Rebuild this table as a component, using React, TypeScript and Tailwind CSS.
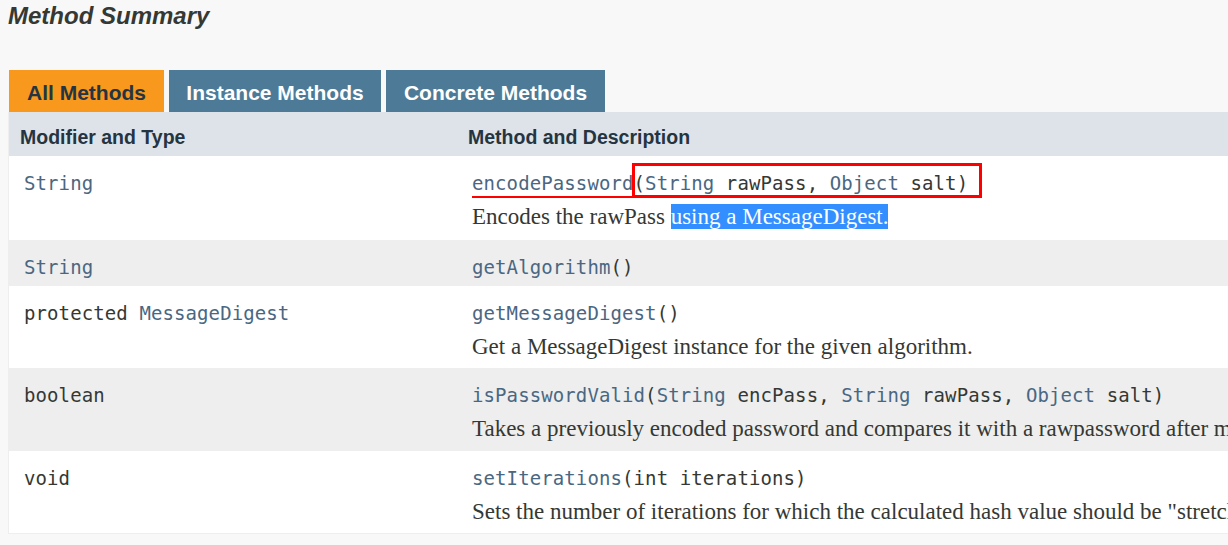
import React from 'react';

type Part = { text: string; link?: boolean };

interface MethodRow {
  modifier: Part[];
  name: string;
  params: Part[];
  desc?: string;
  height: string;
  shaded: boolean;
}

const rows: MethodRow[] = [
  {
    modifier: [{ text: 'String', link: true }],
    name: 'encodePassword',
    params: [
      { text: '(' },
      { text: 'String', link: true },
      { text: ' rawPass, ' },
      { text: 'Object', link: true },
      { text: ' salt)' },
    ],
    desc: 'Encodes the rawPass',
    height: 'h-[84px]',
    shaded: false,
  },
  {
    modifier: [{ text: 'String', link: true }],
    name: 'getAlgorithm',
    params: [{ text: '()' }],
    height: 'h-[46px]',
    shaded: true,
  },
  {
    modifier: [{ text: 'protected ' }, { text: 'MessageDigest', link: true }],
    name: 'getMessageDigest',
    params: [{ text: '()' }],
    desc: 'Get a MessageDigest instance for the given algorithm.',
    height: 'h-[82px]',
    shaded: false,
  },
  {
    modifier: [{ text: 'boolean' }],
    name: 'isPasswordValid',
    params: [
      { text: '(' },
      { text: 'String', link: true },
      { text: ' encPass, ' },
      { text: 'String', link: true },
      { text: ' rawPass, ' },
      { text: 'Object', link: true },
      { text: ' salt)' },
    ],
    desc: 'Takes a previously encoded password and compares it with a rawpassword after mixing in the salt and encoding that value',
    height: 'h-[83px]',
    shaded: true,
  },
  {
    modifier: [{ text: 'void' }],
    name: 'setIterations',
    params: [{ text: '(int iterations)' }],
    desc: 'Sets the number of iterations for which the calculated hash value should be "stretched".',
    height: 'h-[82px]',
    shaded: false,
  },
];

const mono =
  "font-['DejaVu_Sans_Mono','Liberation_Mono',monospace] text-[19px] leading-[30px] tracking-[0.1px]";

function Code({ parts }: { parts: Part[] }) {
  return (
    <>
      {parts.map((p, i) => (
        <span key={i} className={p.link ? 'text-[#4a6782]' : 'text-[#353833]'}>
          {p.text}
        </span>
      ))}
    </>
  );
}

export default function App() {
  return (
    <div className="w-[1228px] h-[545px] overflow-hidden bg-[#f8f8f8] text-[#353833]">
      {/* Section title */}
      <h3 className="pl-[8px] pt-[1px] font-['Liberation_Sans',Arial,sans-serif] text-[24px] leading-[30px] font-bold italic text-[#353833]">
        Method Summary
      </h3>

      {/* Tabs */}
      <div className="mt-[39px] ml-[9px] flex gap-[5px] font-['Liberation_Sans',Arial,sans-serif] text-[21px] font-bold">
        <div className="w-[155px] h-[42px] pt-[3px] flex items-center justify-center bg-[#f8981d] text-[#253441]">
          All Methods
        </div>
        <div className="w-[212px] h-[42px] pt-[3px] flex items-center justify-center bg-[#4d7a97] text-white">
          Instance Methods
        </div>
        <div className="w-[219px] h-[42px] pt-[3px] flex items-center justify-center bg-[#4d7a97] text-white">
          Concrete Methods
        </div>
      </div>

      {/* Summary table */}
      <div className="ml-[8px] w-[1240px] border-l border-b border-[#eeeeee]">
        <div className="grid grid-cols-[451px_1fr] h-[44px] pt-[7px] items-center bg-[#dee3e9] font-['Liberation_Sans',Arial,sans-serif] text-[19.5px] font-bold text-[#253441]">
          <div className="pl-[11px]">Modifier and Type</div>
          <div className="pl-[8px]">Method and Description</div>
        </div>

        {rows.map((row, idx) => (
          <div
            key={row.name}
            className={`grid grid-cols-[451px_1fr] ${row.height} ${row.shaded ? 'bg-[#eeeeee]' : 'bg-white'}`}
          >
            <div className={`pl-[15px] pt-[12px] ${mono} whitespace-nowrap`}>
              <Code parts={row.modifier} />
            </div>
            <div className="pl-[12px] pt-[12px] whitespace-nowrap">
              <div className={mono}>
                {idx === 0 ? (
                  <>
                    <span className="relative text-[#4a6782]">
                      {row.name}
                      <span className="absolute left-0 right-[1px] bottom-[-4px] h-[2px] bg-[#ff0000]" />
                    </span>
                    <span className="relative">
                      <Code parts={row.params} />
                      <span className="absolute left-[-2px] right-[-14px] top-[-9px] bottom-[-4px] border-[3px] border-[#ff0000]" />
                    </span>
                  </>
                ) : (
                  <>
                    <span className="text-[#4a6782]">{row.name}</span>
                    <Code parts={row.params} />
                  </>
                )}
              </div>
              {row.desc && (
                <div className="mt-[2px] font-['Liberation_Serif','Times_New_Roman',serif] text-[23px] leading-[34px] text-[#353833]">
                  {row.desc}
                  {idx === 0 && (
                    <>
                      {' '}
                      <span className="bg-[#338fff] text-white">using a MessageDigest.</span>
                    </>
                  )}
                </div>
              )}
            </div>
          </div>
        ))}
      </div>
    </div>
  );
}
